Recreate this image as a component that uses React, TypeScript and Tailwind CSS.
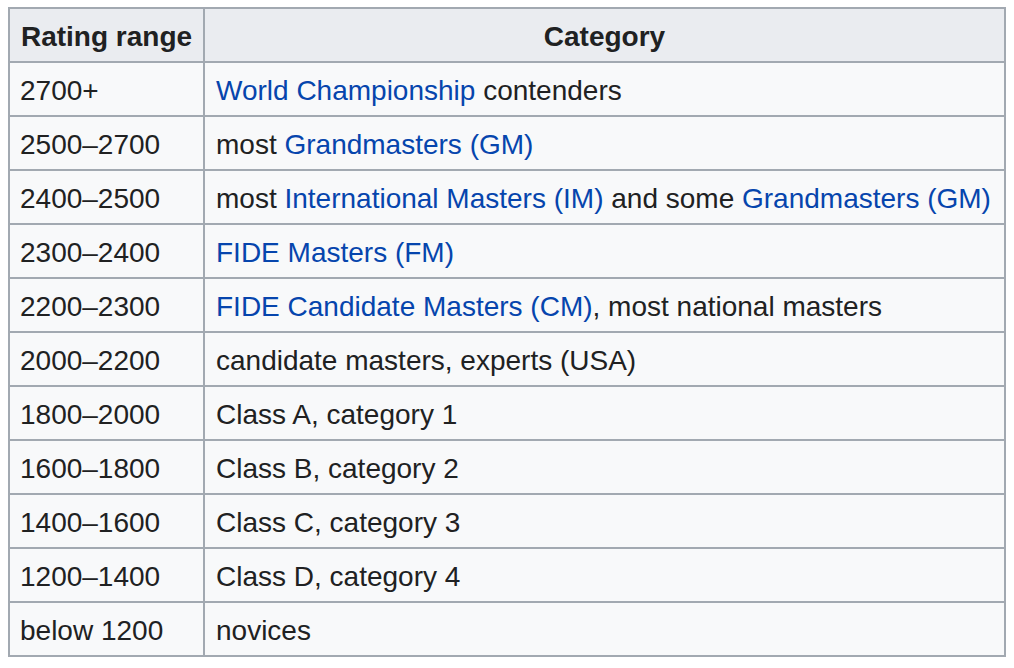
import React from 'react';

type Part = { text: string; link?: boolean };

const rows: { range: string; category: Part[] }[] = [
  { range: '2700+', category: [{ text: 'World Championship', link: true }, { text: ' contenders' }] },
  { range: '2500–2700', category: [{ text: 'most ' }, { text: 'Grandmasters (GM)', link: true }] },
  {
    range: '2400–2500',
    category: [
      { text: 'most ' },
      { text: 'International Masters (IM)', link: true },
      { text: ' and some ' },
      { text: 'Grandmasters (GM)', link: true },
    ],
  },
  { range: '2300–2400', category: [{ text: 'FIDE Masters (FM)', link: true }] },
  {
    range: '2200–2300',
    category: [{ text: 'FIDE Candidate Masters (CM)', link: true }, { text: ', most national masters' }],
  },
  { range: '2000–2200', category: [{ text: 'candidate masters, experts (USA)' }] },
  { range: '1800–2000', category: [{ text: 'Class A, category 1' }] },
  { range: '1600–1800', category: [{ text: 'Class B, category 2' }] },
  { range: '1400–1600', category: [{ text: 'Class C, category 3' }] },
  { range: '1200–1400', category: [{ text: 'Class D, category 4' }] },
  { range: 'below 1200', category: [{ text: 'novices' }] },
];

const App: React.FC = () => {
  return (
    <div className="min-h-screen bg-white pt-[7px] pl-[8px] font-['Liberation_Sans',Arial,sans-serif] text-[28px] text-[#202122]">
      <table className="w-[998px] table-fixed border-collapse border-2 border-[#a2a9b1] bg-[#f8f9fa]">
        <colgroup>
          <col className="w-[195px]" />
          <col />
        </colgroup>
        <thead>
          <tr className="h-[54px] bg-[#eaecf0]">
            <th className="border-2 border-[#a2a9b1] px-[6px] pt-[4px] pb-0 text-center font-bold leading-none whitespace-nowrap">Rating range</th>
            <th className="border-2 border-[#a2a9b1] px-[11px] pt-[4px] pb-0 text-center font-bold leading-none whitespace-nowrap">Category</th>
          </tr>
        </thead>
        <tbody>
          {rows.map(r => (
            <tr key={r.range} className="h-[54px]">
              <td className="border-2 border-[#a2a9b1] pl-[10px] pr-[6px] pt-[4px] pb-0 leading-none whitespace-nowrap">{r.range}</td>
              <td className="border-2 border-[#a2a9b1] px-[11px] pt-[4px] pb-0 leading-none whitespace-nowrap">
                {r.category.map((p, i) =>
                  p.link ? (
                    <span key={i} className="text-[#0645ad]">{p.text}</span>
                  ) : (
                    <span key={i}>{p.text}</span>
                  )
                )}
              </td>
            </tr>
          ))}
        </tbody>
      </table>
    </div>
  );
};

export default App;
